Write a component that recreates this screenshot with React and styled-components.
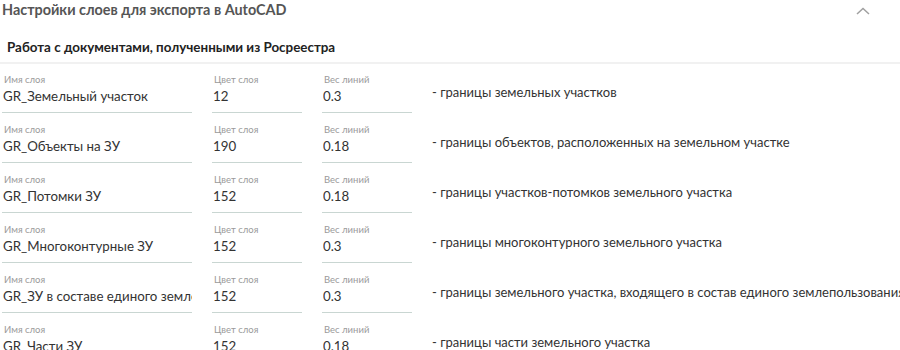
import React from "react";
import styled, { createGlobalStyle } from "styled-components";

const Global = createGlobalStyle`
  html, body { margin: 0; padding: 0; background: #fff; overflow: hidden; }
  body { font-family: Lato, "Open Sans", sans-serif; color: #333; }
  * { box-sizing: border-box; }
`;

const Panel = styled.section`
  width: 900px;
  height: 350px;
  overflow: hidden;
`;

const Header = styled.header`
  display: flex;
  align-items: center;
  justify-content: space-between;
  height: 20px;
  padding: 0 30px 0 2px;
`;

const Title = styled.h2`
  margin: 0;
  font-size: 14.4px;
  font-weight: 700;
  color: #555;
  line-height: 18px;
`;

const Chevron = styled.svg`
  width: 14px;
  height: 8px;
  margin-top: 2px;
`;

const SubTitle = styled.h3`
  margin: 17px 0 0;
  padding: 0 0 5px 7px;
  font-size: 13.4px;
  font-weight: 700;
  color: #222;
  line-height: 20px;
  border-bottom: 2px solid #f1f1f1;
`;

const Rows = styled.div`
  display: flex;
  flex-direction: column;
  gap: 11px;
  padding: 10px 0 0 2px;
`;

const Row = styled.div`
  display: grid;
  grid-template-columns: 190px 90px 90px auto;
  column-gap: 20px;
  align-items: center;
`;

const Field = styled.label`
  display: flex;
  flex-direction: column;
  border-bottom: 1px solid #c9d6d2;
`;

const FieldLabel = styled.span`
  font-size: 9.5px;
  line-height: 12px;
  color: #9a9a9a;
  padding-left: 2px;
`;

const FieldInput = styled.input`
  border: none;
  outline: none;
  padding: 0 0 0 1px;
  margin: 0 0 6px;
  height: 20px;
  width: 100%;
  font-family: inherit;
  font-size: 13.3px;
  color: #333;
  background: transparent;
`;

const Description = styled.span`
  font-size: 13px;
  color: #333;
  white-space: nowrap;
  margin-top: -3px;
`;

const layers = [
  ["GR_Земельный участок", "12", "0.3", "- границы земельных участков"],
  ["GR_Объекты на ЗУ", "190", "0.18", "- границы объектов, расположенных на земельном участке"],
  ["GR_Потомки ЗУ", "152", "0.18", "- границы участков-потомков земельного участка"],
  ["GR_Многоконтурные ЗУ", "152", "0.3", "- границы многоконтурного земельного участка"],
  ["GR_ЗУ в составе единого землепользования", "152", "0.3", "- границы земельного участка, входящего в состав единого землепользования"],
  ["GR_Части ЗУ", "152", "0.18", "- границы части земельного участка"],
];

export default function App() {
  return (
    <Panel>
      <Global />
      <Header>
        <Title>Настройки слоев для экспорта в AutoCAD</Title>
        <Chevron viewBox="0 0 14 8">
          <path d="M1 7 L7 1.5 L13 7" fill="none" stroke="#a0a0a0" strokeWidth="1.5" />
        </Chevron>
      </Header>
      <SubTitle>Работа с документами, полученными из Росреестра</SubTitle>
      <Rows>
        {layers.map(([name, color, weight, desc]) => (
          <Row key={name}>
            <Field>
              <FieldLabel>Имя слоя</FieldLabel>
              <FieldInput readOnly value={name} />
            </Field>
            <Field>
              <FieldLabel>Цвет слоя</FieldLabel>
              <FieldInput readOnly value={color} />
            </Field>
            <Field>
              <FieldLabel>Вес линий</FieldLabel>
              <FieldInput readOnly value={weight} />
            </Field>
            <Description>{desc}</Description>
          </Row>
        ))}
      </Rows>
    </Panel>
  );
}
